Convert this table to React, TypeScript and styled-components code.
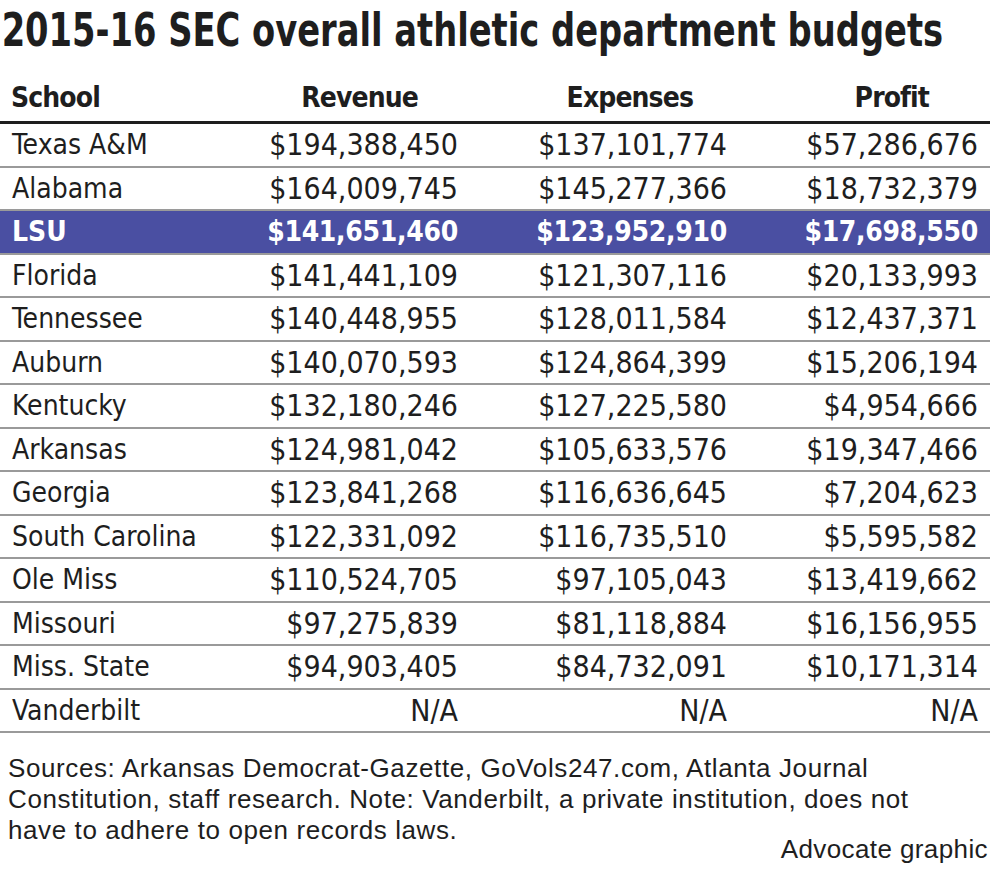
import React from "react";
import styled, { createGlobalStyle } from "styled-components";

const Global = createGlobalStyle`
  html, body { margin: 0; padding: 0; background: #fff; }
  body { width: 990px; height: 872px; overflow: hidden; }
`;

const Page = styled.div`
  width: 990px;
  height: 872px;
  display: flex;
  flex-direction: column;
  color: #1e1e1e;
  font-family: "DejaVu Sans Condensed", "DejaVu Sans", sans-serif;
  font-stretch: condensed;
`;

const TitleBar = styled.div`
  height: 73px;
  overflow: hidden;
`;

const Title = styled.h1`
  margin: 0;
  padding: 3px 0 0 2px;
  font-size: 46px;
  line-height: 54px;
  font-weight: 700;
  white-space: nowrap;
  transform: scaleX(0.815);
  transform-origin: left top;
`;

const Table = styled.div`
  display: grid;
  grid-template-columns: 256px 214px 269px 251px;
`;

const HeadCell = styled.div<{ $pr: number; $left?: boolean }>`
  height: 48px;
  padding: 0 ${(p) => p.$pr}px 0 ${(p) => (p.$left ? 11 : 0)}px;
  display: flex;
  align-items: center;
  justify-content: ${(p) => (p.$left ? "flex-start" : "flex-end")};
  font-size: 28px;
  letter-spacing: -0.9px;
  font-weight: 700;
  border-bottom: 3px solid #1e1e1e;
`;

const Cell = styled.div<{ $hl: boolean; $left?: boolean }>`
  height: 41.5px;
  display: flex;
  align-items: center;
  justify-content: ${(p) => (p.$left ? "flex-start" : "flex-end")};
  padding: 0 ${(p) => (p.$left ? 0 : 12)}px 0 ${(p) => (p.$left ? 12 : 0)}px;
  font-size: ${(p) => (p.$left || p.$hl ? 28 : 30)}px;
  letter-spacing: ${(p) => (p.$hl && !p.$left ? -0.3 : 0)}px;
  font-weight: ${(p) => (p.$hl ? 700 : 400)};
  background: ${(p) => (p.$hl ? "#4a4fa2" : "#fff")};
  color: ${(p) => (p.$hl ? "#fff" : "#1e1e1e")};
  border-bottom: 2px solid #9a9a9a;
  white-space: nowrap;
`;

const FootText = styled.div`
  font-family: "Liberation Sans", Arial, sans-serif;
  font-stretch: normal;
  font-size: 26px;
  letter-spacing: 0.6px;
  line-height: 31px;
  color: #1e1e1e;
  white-space: nowrap;
`;

const Notes = styled(FootText)`
  padding: 20px 0 0 8px;
`;

const Credit = styled(FootText)`
  align-self: flex-end;
  margin-top: -12px;
  padding-right: 2px;
  letter-spacing: 0.4px;
`;

const rows: [string, string, string, string][] = [
  ["Texas A&M", "$194,388,450", "$137,101,774", "$57,286,676"],
  ["Alabama", "$164,009,745", "$145,277,366", "$18,732,379"],
  ["LSU", "$141,651,460", "$123,952,910", "$17,698,550"],
  ["Florida", "$141,441,109", "$121,307,116", "$20,133,993"],
  ["Tennessee", "$140,448,955", "$128,011,584", "$12,437,371"],
  ["Auburn", "$140,070,593", "$124,864,399", "$15,206,194"],
  ["Kentucky", "$132,180,246", "$127,225,580", "$4,954,666"],
  ["Arkansas", "$124,981,042", "$105,633,576", "$19,347,466"],
  ["Georgia", "$123,841,268", "$116,636,645", "$7,204,623"],
  ["South Carolina", "$122,331,092", "$116,735,510", "$5,595,582"],
  ["Ole Miss", "$110,524,705", "$97,105,043", "$13,419,662"],
  ["Missouri", "$97,275,839", "$81,118,884", "$16,156,955"],
  ["Miss. State", "$94,903,405", "$84,732,091", "$10,171,314"],
  ["Vanderbilt", "N/A", "N/A", "N/A"],
];

export default function App() {
  return (
    <Page>
      <Global />
      <TitleBar>
        <Title>2015-16 SEC overall athletic department budgets</Title>
      </TitleBar>
      <Table>
        <HeadCell $left $pr={0}>School</HeadCell>
        <HeadCell $pr={52}>Revenue</HeadCell>
        <HeadCell $pr={46}>Expenses</HeadCell>
        <HeadCell $pr={61}>Profit</HeadCell>
        {rows.map((r) => {
          const hl = r[0] === "LSU";
          return (
            <React.Fragment key={r[0]}>
              <Cell $hl={hl} $left>{r[0]}</Cell>
              <Cell $hl={hl}>{r[1]}</Cell>
              <Cell $hl={hl}>{r[2]}</Cell>
              <Cell $hl={hl}>{r[3]}</Cell>
            </React.Fragment>
          );
        })}
      </Table>
      <Notes>
        Sources: Arkansas Democrat-Gazette, GoVols247.com, Atlanta Journal
        <br />
        Constitution, staff research. Note: Vanderbilt, a private institution, does not
        <br />
        have to adhere to open records laws.
      </Notes>
      <Credit>Advocate graphic</Credit>
    </Page>
  );
}
